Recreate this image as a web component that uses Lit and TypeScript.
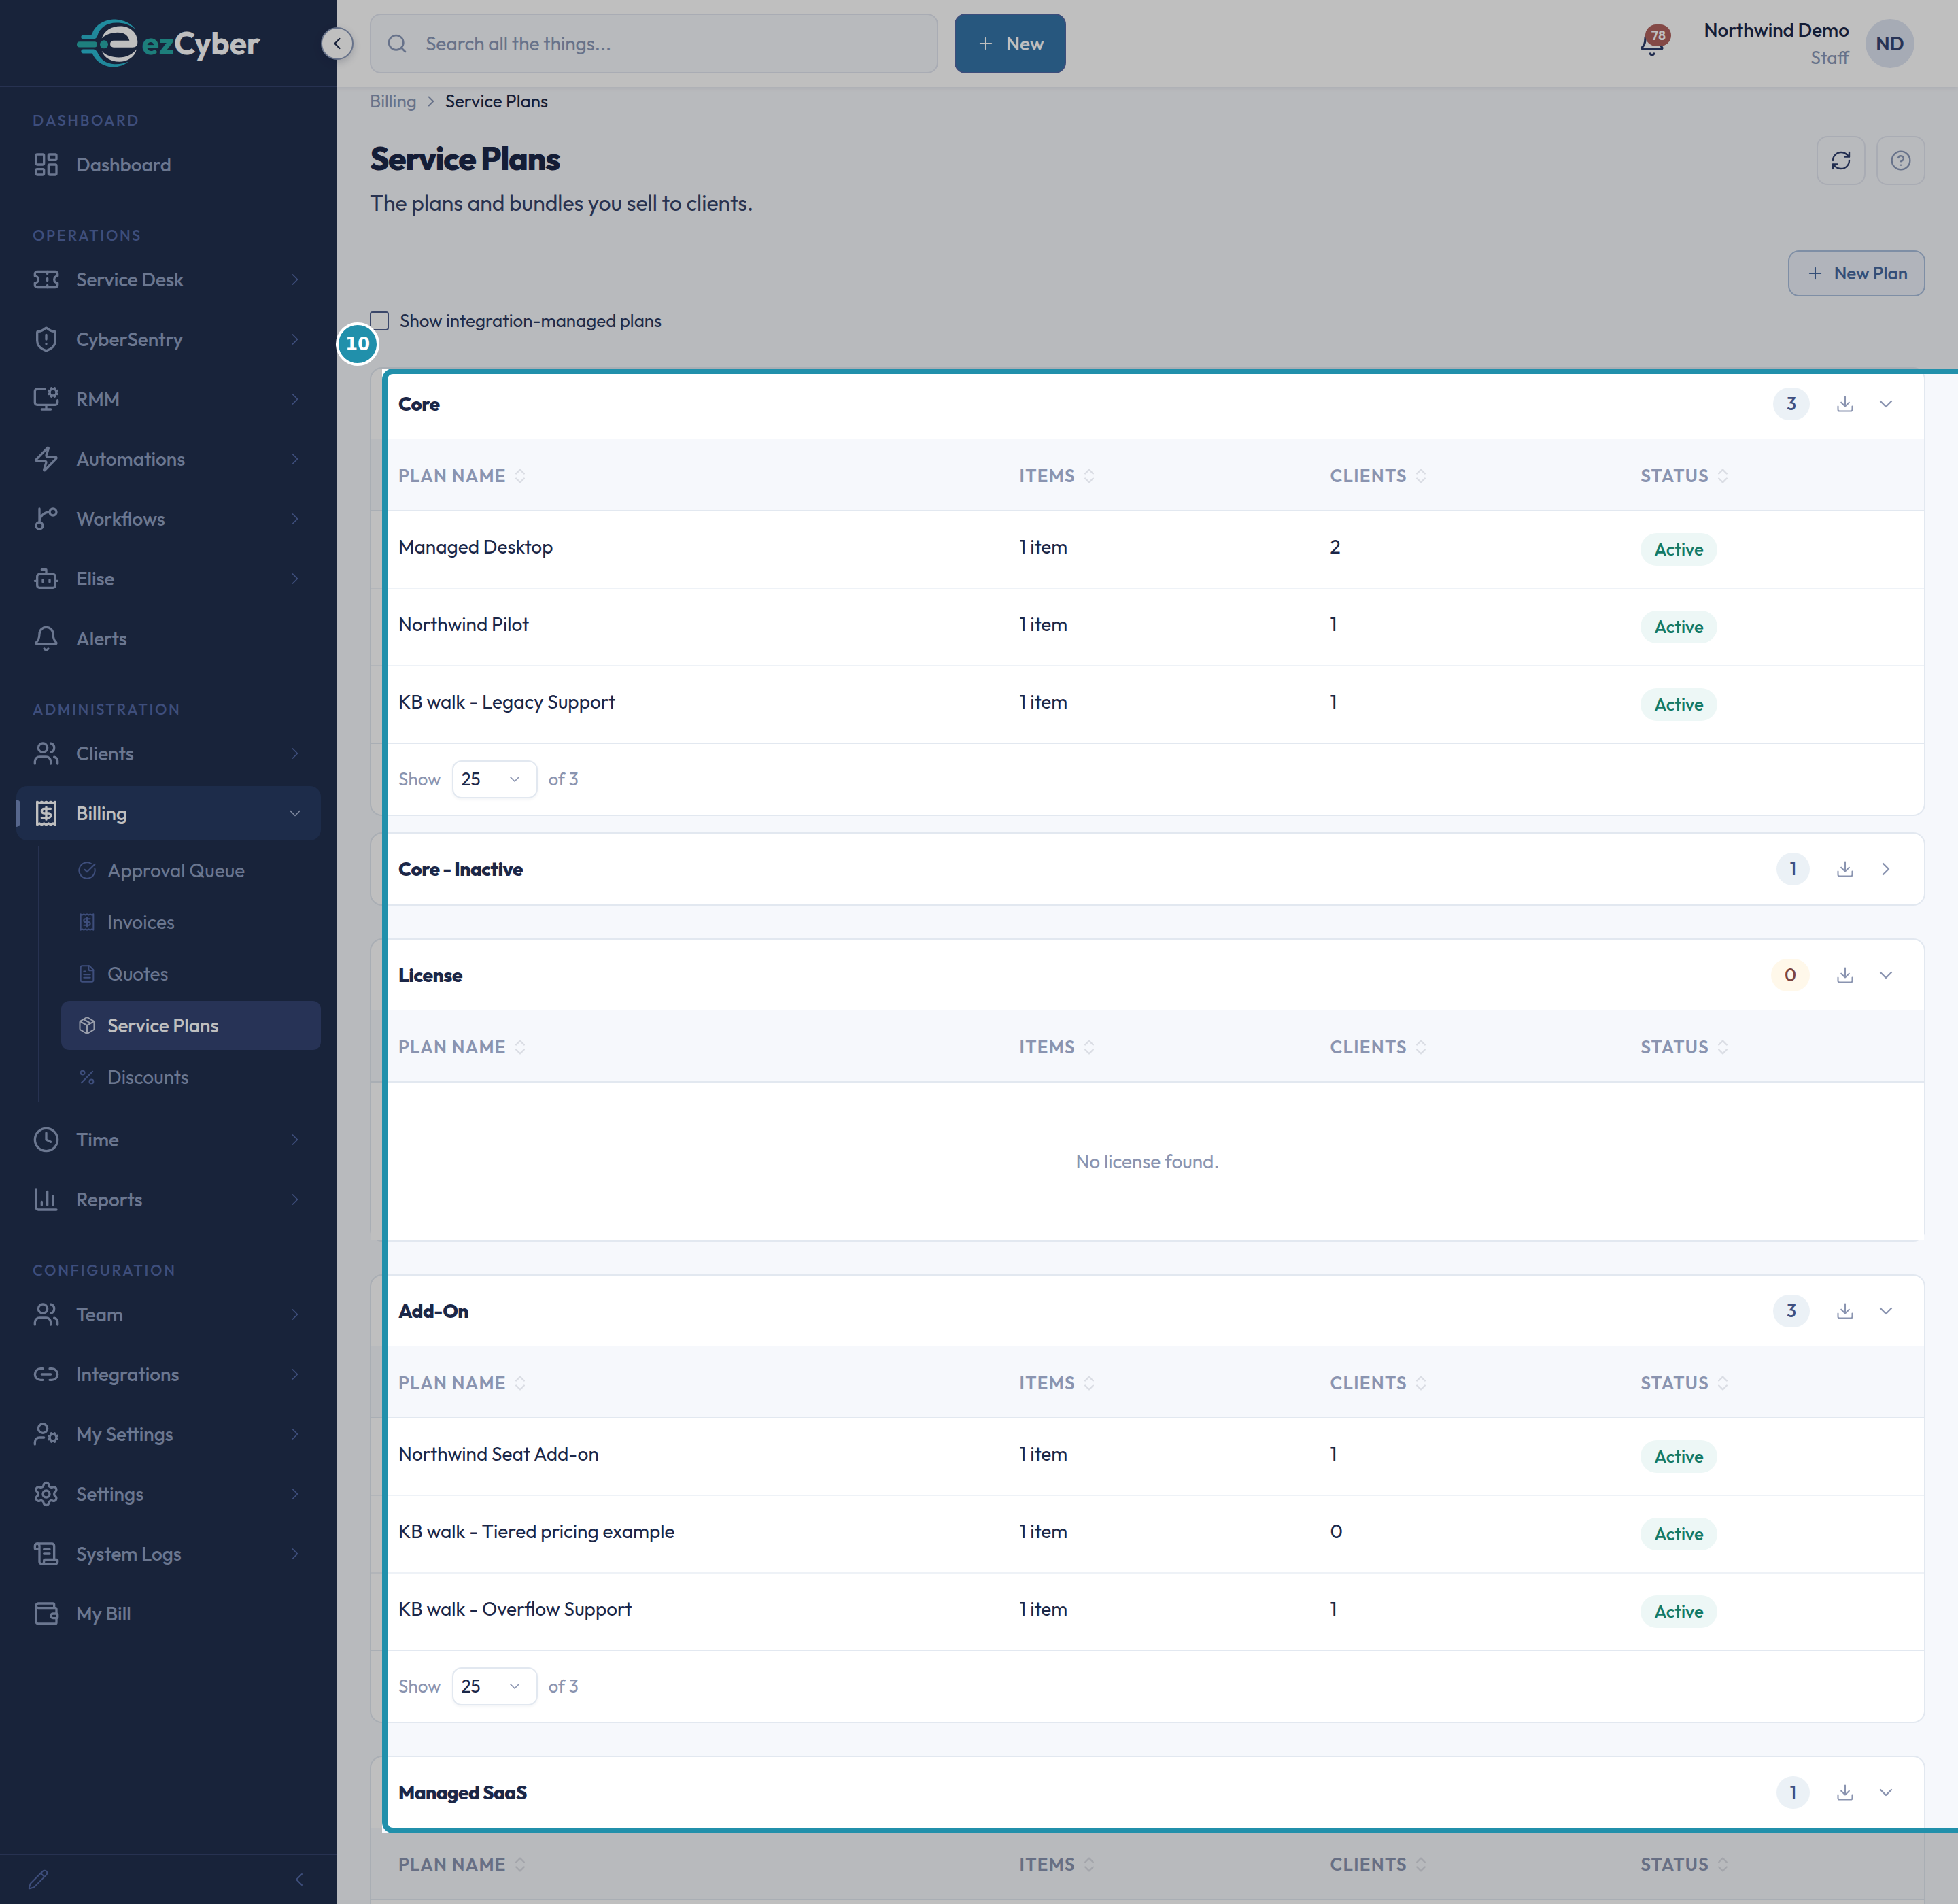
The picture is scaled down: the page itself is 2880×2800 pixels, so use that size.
import { LitElement, html, css, svg, nothing } from 'lit';
import { customElement, property } from 'lit/decorators.js';
import { classMap } from 'lit/directives/class-map.js';

const icons: Record<string, unknown> = {
    dashboard: svg`<rect x="3" y="3" width="7" height="9" rx="1"/><rect x="14" y="3" width="7" height="5" rx="1"/><rect x="14" y="12" width="7" height="9" rx="1"/><rect x="3" y="16" width="7" height="5" rx="1"/>`,
    ticket: svg`<path d="M2 9a3 3 0 0 1 0 6v2a2 2 0 0 0 2 2h16a2 2 0 0 0 2-2v-2a3 3 0 0 1 0-6V7a2 2 0 0 0-2-2H4a2 2 0 0 0-2 2Z"/><path d="M13 5v2M13 17v2M13 11v2"/>`,
    shield: svg`<path d="M20 13c0 5-3.5 7.5-7.66 8.95a1 1 0 0 1-.67-.01C7.5 20.5 4 18 4 13V6a1 1 0 0 1 1-1c2 0 4.5-1.2 6.24-2.72a1.17 1.17 0 0 1 1.52 0C14.51 3.81 17 5 19 5a1 1 0 0 1 1 1z"/><path d="M12 8v4M12 16h.01"/>`,
    monitor: svg`<path d="M12 17v4M8 21h8M22 13v2a2 2 0 0 1-2 2H4a2 2 0 0 1-2-2V5a2 2 0 0 1 2-2h7"/><circle cx="18" cy="6" r="3"/><path d="m15.2 4.9-.9-.4M15.2 7.1l-.9.4M16.9 3.2l-.4-.9M16.9 8.8l-.4.9M19.5 2.3l-.4.9M19.5 9.7l-.4-.9M21.7 4.5l-.9.4M21.7 7.5l-.9-.4"/>`,
    zap: svg`<path d="M4 14a1 1 0 0 1-.78-1.63l9.9-10.2a.5.5 0 0 1 .86.46l-1.92 6.02A1 1 0 0 0 13 10h7a1 1 0 0 1 .78 1.63l-9.9 10.2a.5.5 0 0 1-.86-.46l1.92-6.02A1 1 0 0 0 11 14z"/>`,
    branch: svg`<path d="M15 6a9 9 0 0 0-9 9V3"/><circle cx="18" cy="6" r="3"/><circle cx="6" cy="18" r="3"/>`,
    bot: svg`<path d="M12 8V4H8"/><rect x="4" y="8" width="16" height="12" rx="2"/><path d="M2 14h2M20 14h2M15 13v2M9 13v2"/>`,
    bell: svg`<path d="M10.268 21a2 2 0 0 0 3.464 0"/><path d="M3.262 15.326A1 1 0 0 0 4 17h16a1 1 0 0 0 .74-1.673C19.41 13.956 18 12.499 18 8A6 6 0 0 0 6 8c0 4.499-1.411 5.956-2.738 7.326"/>`,
    users: svg`<path d="M16 21v-2a4 4 0 0 0-4-4H6a4 4 0 0 0-4 4v2"/><circle cx="9" cy="7" r="4"/><path d="M22 21v-2a4 4 0 0 0-3-3.87M16 3.13a4 4 0 0 1 0 7.75"/>`,
    receipt: svg`<path d="M4 2v20l2-1 2 1 2-1 2 1 2-1 2 1 2-1 2 1V2l-2 1-2-1-2 1-2-1-2 1-2-1-2 1Z"/><path d="M16 8h-6a2 2 0 1 0 0 4h4a2 2 0 1 1 0 4H8M12 17.5v-11"/>`,
    approve: svg`<path d="M21.801 10A10 10 0 1 1 17 3.335"/><path d="m9 11 3 3L22 4"/>`,
    file: svg`<path d="M15 2H6a2 2 0 0 0-2 2v16a2 2 0 0 0 2 2h12a2 2 0 0 0 2-2V7Z"/><path d="M14 2v4a2 2 0 0 0 2 2h4M10 9H8M16 13H8M16 17H8"/>`,
    package: svg`<path d="M11 21.73a2 2 0 0 0 2 0l7-4A2 2 0 0 0 21 16V8a2 2 0 0 0-1-1.73l-7-4a2 2 0 0 0-2 0l-7 4A2 2 0 0 0 3 8v8a2 2 0 0 0 1 1.73z"/><path d="M12 22V12M3.29 7 12 12l8.71-5M7.5 4.27l9 5.15"/>`,
    percent: svg`<path d="M19 5 5 19"/><circle cx="6.5" cy="6.5" r="2.5"/><circle cx="17.5" cy="17.5" r="2.5"/>`,
    clock: svg`<circle cx="12" cy="12" r="10"/><path d="M12 6v6l4 2"/>`,
    chart: svg`<path d="M3 3v16a2 2 0 0 0 2 2h16M18 17V9M13 17V5M8 17v-3"/>`,
    link: svg`<path d="M9 17H7A5 5 0 0 1 7 7h2M15 7h2a5 5 0 1 1 0 10h-2M8 12h8"/>`,
    userCog: svg`<circle cx="9" cy="7" r="4"/><path d="M10 15H6a4 4 0 0 0-4 4v2"/><circle cx="18" cy="15" r="3"/><path d="m21.7 16.4-.9-.3M15.2 13.9l-.9-.3M16.6 18.7l.3-.9M19.1 12.2l.3-.9M19.6 18.7l-.4-1M16.8 12.3l-.4-1M14.3 16.6l1-.4M20.7 13.8l1-.4"/>`,
    settings: svg`<path d="M9.671 4.136a2.34 2.34 0 0 1 4.659 0 2.34 2.34 0 0 0 3.319 1.915 2.34 2.34 0 0 1 2.33 4.033 2.34 2.34 0 0 0 0 3.831 2.34 2.34 0 0 1-2.33 4.033 2.34 2.34 0 0 0-3.319 1.915 2.34 2.34 0 0 1-4.659 0 2.34 2.34 0 0 0-3.32-1.915 2.34 2.34 0 0 1-2.33-4.033 2.34 2.34 0 0 0 0-3.831A2.34 2.34 0 0 1 6.35 6.051a2.34 2.34 0 0 0 3.319-1.915"/><circle cx="12" cy="12" r="3"/>`,
    scroll: svg`<path d="M15 12h-5M15 8h-5M19 17V5a2 2 0 0 0-2-2H4"/><path d="M8 21h12a2 2 0 0 0 2-2v-1a1 1 0 0 0-1-1H11a1 1 0 0 0-1 1v1a2 2 0 1 1-4 0V5a2 2 0 1 0-4 0v2a1 1 0 0 0 1 1h3"/>`,
    wallet: svg`<path d="M19 7V4a1 1 0 0 0-1-1H5a2 2 0 0 0 0 4h15a1 1 0 0 1 1 1v4h-3a2 2 0 0 0 0 4h3a1 1 0 0 0 1-1v-2a1 1 0 0 0-1-1"/><path d="M3 5v14a2 2 0 0 0 2 2h15a1 1 0 0 0 1-1v-4"/>`,
    pencil: svg`<path d="M21.174 6.812a1 1 0 0 0-3.986-3.987L3.842 16.174a2 2 0 0 0-.5.83l-1.321 4.352a.5.5 0 0 0 .623.622l4.353-1.32a2 2 0 0 0 .83-.497z"/><path d="m15 5 4 4"/>`,
    refresh: svg`<path d="M3 12a9 9 0 0 1 9-9 9.75 9.75 0 0 1 6.74 2.74L21 8M21 3v5h-5M21 12a9 9 0 0 1-9 9 9.75 9.75 0 0 1-6.74-2.74L3 16M8 16H3v5"/>`,
    help: svg`<circle cx="12" cy="12" r="10"/><path d="M9.09 9a3 3 0 0 1 5.83 1c0 2-3 3-3 3M12 17h.01"/>`,
    search: svg`<circle cx="11" cy="11" r="8"/><path d="m21 21-4.3-4.3"/>`,
    plus: svg`<path d="M5 12h14M12 5v14"/>`,
    download: svg`<path d="M21 15v4a2 2 0 0 1-2 2H5a2 2 0 0 1-2-2v-4M7 10l5 5 5-5M12 15V3"/>`,
    sort: svg`<path d="m7 15 5 5 5-5M7 9l5-5 5 5"/>`,
    left: svg`<path d="m15 18-6-6 6-6"/>`,
    right: svg`<path d="m9 18 6-6-6-6"/>`,
    down: svg`<path d="m6 9 6 6 6-6"/>`
};

@customElement('ui-icon')
class UiIcon extends LitElement {
    static styles = css`
        :host {
            display: inline-flex;
            flex: none;
            width: 28px;
            height: 28px;
        }

        svg {
            width: 100%;
            height: 100%;
            fill: none;
            stroke: currentColor;
            stroke-linecap: round;
            stroke-linejoin: round;
        }
    `;

    @property() name = '';
    @property({ type: Number }) stroke = 1.75;

    render() {
        return html`<svg viewBox="0 0 24 24" stroke-width=${this.stroke} aria-hidden="true">${icons[this.name]}</svg>`;
    }
}

interface NavItem {
    label: string;
    icon: string;
    open?: boolean;
    leaf?: boolean;
    children?: { label: string; icon: string; active?: boolean }[];
}

const navigation: { title: string; items: NavItem[] }[] = [
    { title: 'Dashboard', items: [{ label: 'Dashboard', icon: 'dashboard', leaf: true }] },
    {
        title: 'Operations',
        items: [
            { label: 'Service Desk', icon: 'ticket' },
            { label: 'CyberSentry', icon: 'shield' },
            { label: 'RMM', icon: 'monitor' },
            { label: 'Automations', icon: 'zap' },
            { label: 'Workflows', icon: 'branch' },
            { label: 'Elise', icon: 'bot' },
            { label: 'Alerts', icon: 'bell', leaf: true }
        ]
    },
    {
        title: 'Administration',
        items: [
            { label: 'Clients', icon: 'users' },
            {
                label: 'Billing',
                icon: 'receipt',
                open: true,
                children: [
                    { label: 'Approval Queue', icon: 'approve' },
                    { label: 'Invoices', icon: 'receipt' },
                    { label: 'Quotes', icon: 'file' },
                    { label: 'Service Plans', icon: 'package', active: true },
                    { label: 'Discounts', icon: 'percent' }
                ]
            },
            { label: 'Time', icon: 'clock' },
            { label: 'Reports', icon: 'chart' }
        ]
    },
    {
        title: 'Configuration',
        items: [
            { label: 'Team', icon: 'users' },
            { label: 'Integrations', icon: 'link' },
            { label: 'My Settings', icon: 'userCog' },
            { label: 'Settings', icon: 'settings' },
            { label: 'System Logs', icon: 'scroll' },
            { label: 'My Bill', icon: 'wallet', leaf: true }
        ]
    }
];

@customElement('side-nav')
class SideNav extends LitElement {
    static styles = css`
        :host {
            position: relative;
            display: flex;
            flex-direction: column;
            flex: none;
            width: 496px;
            background: #212f4e;
            color: #8f9fc1;
            font-size: 28px;
            line-height: 36px;
        }

        a {
            color: inherit;
            text-decoration: none;
        }

        .brand {
            display: flex;
            justify-content: center;
            align-items: center;
            gap: 6px;
            box-sizing: border-box;
            height: 128px;
            border-bottom: 2px solid #34436c;
            color: #fff;
            font-size: 46px;
            font-weight: 700;
            line-height: 56px;
        }

        .brand svg {
            width: 90px;
            height: 71px;
        }

        .brand span {
            color: #27a9a4;
        }

        .collapse {
            position: absolute;
            top: 40px;
            right: -24px;
            z-index: 2;
            display: flex;
            justify-content: center;
            align-items: center;
            width: 48px;
            height: 48px;
            padding: 0;
            border: 2px solid #8a99b8;
            border-radius: 50%;
            background: #fff;
            color: #1f2b4c;
            box-shadow: 0 4px 12px rgba(20, 30, 60, 0.2);
        }

        nav {
            flex: 1;
            padding: 0 24px;
        }

        h2 {
            margin: 0;
            padding: 34px 24px 10px;
            color: #5369a6;
            font-size: 22px;
            font-weight: 500;
            line-height: 30px;
            letter-spacing: 0.12em;
            text-transform: uppercase;
        }

        section + section h2 {
            padding-top: 41px;
        }

        .item {
            position: relative;
            display: flex;
            align-items: center;
            gap: 24px;
            box-sizing: border-box;
            height: 80px;
            margin-bottom: 8px;
            padding: 0 24px;
            border-radius: 16px;
            font-weight: 500;
        }

        .item > ui-icon:first-child {
            width: 40px;
            height: 40px;
        }

        .item span {
            flex: 1;
        }

        .item .chevron {
            color: #5369a6;
        }

        .item.open {
            background: #273b63;
            color: #fff;
        }

        .item.open::before {
            content: '';
            position: absolute;
            left: 0;
            top: 20px;
            width: 6px;
            height: 40px;
            border-radius: 0 6px 6px 0;
            background: #7388bb;
        }

        .item.open .chevron {
            color: #a5b2d0;
        }

        .children {
            display: flex;
            flex-direction: column;
            gap: 4px;
            margin: 0 0 16px 32px;
            padding-left: 32px;
            border-left: 2px solid #34436c;
        }

        .child {
            display: flex;
            align-items: center;
            gap: 16px;
            height: 72px;
            padding: 0 24px;
            border-radius: 12px;
        }

        .child ui-icon {
            color: #5369a6;
        }

        .child.active {
            background: #344473;
            color: #fff;
            font-weight: 500;
        }

        .child.active ui-icon {
            color: #ccd3e4;
        }

        footer {
            display: flex;
            justify-content: space-between;
            align-items: center;
            height: 72px;
            padding: 0 40px;
            border-top: 2px solid #34436c;
        }

        footer button {
            display: flex;
            padding: 0;
            border: none;
            background: none;
            color: #5369a6;
        }

        footer ui-icon {
            width: 32px;
            height: 32px;
        }
    `;

    /** @private */
    renderItem(item: NavItem) {
        return html`
            <a class=${classMap({ item: true, open: !!item.open })} href="#">
                <ui-icon name=${item.icon} stroke="2"></ui-icon>
                <span>${item.label}</span>
                ${item.leaf ? nothing : html`<ui-icon class="chevron" name=${item.open ? 'down' : 'right'} stroke="1.5"></ui-icon>`}
            </a>
            ${item.children
                ? html`<div class="children">
                      ${item.children.map(
                          child => html`
                              <a class=${classMap({ child: true, active: !!child.active })} href="#">
                                  <ui-icon name=${child.icon}></ui-icon>${child.label}
                              </a>
                          `
                      )}
                  </div>`
                : nothing}
        `;
    }

    render() {
        return html`
            <div class="brand">
                <svg viewBox="30 35 270 212" aria-hidden="true">
                    <defs>
                        <linearGradient id="swoosh" x1="0" y1="0" x2="0" y2="1">
                            <stop offset="0" stop-color="#2bbdd6" />
                            <stop offset="1" stop-color="#2bb3cc" />
                        </linearGradient>
                    </defs>
                    <path fill="url(#swoosh)" d="M58 105H88Q97 104 99 96C112 58 155 36 200 36C240 38 270 55 290 80C262 58 235 51 205 51C160 51 130 75 122 105Q118 122 104 123H58A9 9 0 0 1 58 105Z" />
                    <rect x="30" y="134" width="90" height="25" rx="12" fill="#29aaa9" />
                    <circle cx="150" cy="146" r="18" fill="#29aaa9" />
                    <path fill="url(#swoosh)" d="M58 168H104Q116 170 122 184C135 215 160 232 195 233C220 234 240 230 258 222C240 238 215 246 190 246C150 246 112 222 98 186H58A9 9 0 0 1 58 168Z" />
                    <path fill="#fff" d="M140 120C150 85 185 66 222 66C266 66 298 96 298 136C298 152 292 160 275 160H192A15 15 0 0 1 192 130H262C258 108 240 94 210 94C180 94 155 105 140 120Z" />
                    <path fill="#fff" d="M140 175C155 195 185 204 215 204C250 204 275 190 294 168C285 205 250 223 218 223C180 223 150 205 140 175Z" />
                </svg>
                <div><span>ez</span>Cyber</div>
            </div>
            <button class="collapse" aria-label="Collapse sidebar"><ui-icon name="left" stroke="2"></ui-icon></button>
            <nav>
                ${navigation.map(
                    group => html`
                        <section>
                            <h2>${group.title}</h2>
                            ${group.items.map(item => this.renderItem(item))}
                        </section>
                    `
                )}
            </nav>
            <footer>
                <button aria-label="Edit menu"><ui-icon name="pencil" stroke="1.5"></ui-icon></button>
                <button aria-label="Collapse"><ui-icon name="left" stroke="1.5"></ui-icon></button>
            </footer>
        `;
    }
}

interface Plan {
    name: string;
    items: string;
    clients: number;
}

const columns = ['Plan Name', 'Items', 'Clients', 'Status'];

@customElement('plan-card')
class PlanCard extends LitElement {
    static styles = css`
        :host {
            display: block;
            border: 2px solid #e2e8f0;
            border-radius: 18px;
            background: #fff;
        }

        header {
            display: flex;
            align-items: center;
            height: 104px;
            padding: 0 40px;
        }

        h3 {
            flex: 1;
            margin: 0;
            font-size: 28px;
            font-weight: 800;
            letter-spacing: -0.02em;
        }

        .count {
            padding: 6px 20px;
            border-radius: 24px;
            background: #ebf1f6;
            color: #3f5080;
            font-size: 26px;
            font-weight: 500;
            line-height: 36px;
        }

        .count.empty {
            background: #fff8ea;
            color: #7d4540;
        }

        .action {
            display: flex;
            padding: 14px;
            border: none;
            background: none;
            color: #8a94b0;
        }

        .download {
            margin: 0 16px 0 24px;
        }

        .toggle {
            padding: 0;
        }

        .toggle ui-icon {
            width: 32px;
            height: 32px;
        }

        table {
            width: 100%;
            table-layout: fixed;
            border-collapse: separate;
            border-spacing: 0;
        }

        th,
        td {
            box-sizing: border-box;
            padding: 0 40px;
            text-align: left;
        }

        th {
            width: 20%;
            height: 106px;
            padding-top: 4px;
            border-bottom: 2px solid #e2e8f0;
            background: #f6f8fc;
            color: #8a94b0;
            font-size: 26px;
            font-weight: 600;
            letter-spacing: 0.05em;
            text-transform: uppercase;
        }

        th:first-child {
            width: 40%;
        }

        th div {
            display: flex;
            align-items: center;
            gap: 6px;
        }

        th ui-icon {
            color: #dadde4;
        }

        td {
            height: 114px;
            padding-top: 32px;
            border-bottom: 2px solid #eef2f7;
            vertical-align: top;
            line-height: 40px;
        }

        tr:last-child td {
            border-color: #e2e8f0;
        }

        .badge {
            display: block;
            width: fit-content;
            padding: 0 20px;
            border-radius: 24px;
            background: #edf7f6;
            color: #137a67;
            font-size: 26px;
            font-weight: 500;
            line-height: 48px;
        }

        tr:last-child td.none {
            height: 232px;
            padding: 0 40px;
            border: none;
            background: #fff;
            color: #8a94b0;
            text-align: center;
            vertical-align: middle;
        }

        footer {
            display: flex;
            align-items: center;
            gap: 16px;
            height: 104px;
            padding: 0 40px;
            color: #8a94b0;
            font-size: 26px;
        }

        label {
            display: flex;
            align-items: center;
            gap: 16px;
        }

        .select {
            position: relative;
            display: flex;
        }

        .select ui-icon {
            position: absolute;
            right: 22px;
            top: 16px;
            width: 24px;
            height: 24px;
            pointer-events: none;
        }

        select {
            appearance: none;
            width: 126px;
            height: 56px;
            padding: 0 12px;
            border: 2px solid #e2e8f0;
            border-radius: 14px;
            background: #fff;
            color: #1b2748;
            font: inherit;
            box-shadow: 0 2px 4px rgba(27, 39, 72, 0.05);
        }
    `;

    @property() heading = '';
    @property({ type: Number }) count = 0;
    @property({ type: Boolean }) collapsed = false;
    @property({ attribute: false }) plans: Plan[] = [];

    /** @private */
    renderRows() {
        if (!this.plans.length) {
            // a group that has plans stays blank until they are loaded
            const message = this.count ? '' : `No ${this.heading.toLowerCase()} found.`;
            return html`<tr><td class="none" colspan="4">${message}</td></tr>`;
        }

        return this.plans.map(
            plan => html`
                <tr>
                    <td>${plan.name}</td>
                    <td>${plan.items}</td>
                    <td>${plan.clients}</td>
                    <td><span class="badge">Active</span></td>
                </tr>
            `
        );
    }

    /** @private */
    renderTable() {
        return html`
            <table>
                <thead>
                    <tr>
                        ${columns.map(column => html`<th><div>${column}<ui-icon name="sort" stroke="2"></ui-icon></div></th>`)}
                    </tr>
                </thead>
                <tbody>
                    ${this.renderRows()}
                </tbody>
            </table>
            ${this.plans.length
                ? html`<footer>
                      <label>
                          Show
                          <span class="select">
                              <select>
                                  <option>25</option>
                              </select>
                              <ui-icon name="down"></ui-icon>
                          </span>
                      </label>
                      of ${this.count}
                  </footer>`
                : nothing}
        `;
    }

    render() {
        return html`
            <header>
                <h3>${this.heading}</h3>
                <span class=${classMap({ count: true, empty: this.count === 0 })}>${this.count}</span>
                <button class="action download" aria-label="Download"><ui-icon name="download"></ui-icon></button>
                <button class="action toggle" aria-label="Toggle"><ui-icon name=${this.collapsed ? 'right' : 'down'}></ui-icon></button>
            </header>
            ${this.collapsed ? nothing : this.renderTable()}
        `;
    }
}

const corePlans: Plan[] = [
    { name: 'Managed Desktop', items: '1 item', clients: 2 },
    { name: 'Northwind Pilot', items: '1 item', clients: 1 },
    { name: 'KB walk - Legacy Support', items: '1 item', clients: 1 }
];

const addOnPlans: Plan[] = [
    { name: 'Northwind Seat Add-on', items: '1 item', clients: 1 },
    { name: 'KB walk - Tiered pricing example', items: '1 item', clients: 0 },
    { name: 'KB walk - Overflow Support', items: '1 item', clients: 1 }
];

@customElement('app-root')
class AppRoot extends LitElement {
    static styles = css`
        :host {
            display: flex;
            height: 100vh;
            overflow: hidden;
            background: #f6f8fc;
            color: #1b2748;
            font-family: Outfit, Lato, sans-serif;
            font-size: 28px;
            line-height: 36px;
        }

        .page {
            flex: 1;
            min-width: 0;
        }

        .topbar {
            display: flex;
            align-items: center;
            gap: 24px;
            box-sizing: border-box;
            height: 128px;
            padding: 0 64px 0 48px;
            background: #fff;
            box-shadow: 0 2px 6px rgba(27, 39, 72, 0.08);
        }

        .search {
            display: flex;
            align-items: center;
            gap: 26px;
            box-sizing: border-box;
            flex: 0 1 836px;
            height: 88px;
            padding: 0 22px;
            border: 2px solid #e2e6f0;
            border-radius: 16px;
            background: #f6f8fc;
            color: #8a99b8;
        }

        .search ui-icon {
            width: 32px;
            height: 32px;
        }

        .search input {
            flex: 1;
            min-width: 0;
            padding: 0;
            border: none;
            outline: none;
            background: none;
            color: inherit;
            font: inherit;
        }

        .search input::placeholder {
            color: #8a99b8;
        }

        button {
            display: flex;
            justify-content: center;
            align-items: center;
            padding: 0;
            font: inherit;
        }

        .new {
            gap: 16px;
            width: 164px;
            height: 88px;
            border: 2px solid #5167a4;
            border-radius: 16px;
            background: #3575a8;
            color: #fff;
            font-weight: 500;
        }

        .notifications {
            position: relative;
            margin-left: auto;
            border: none;
            background: none;
            color: #2d3d6b;
        }

        .notifications ui-icon {
            width: 40px;
            height: 40px;
        }

        .notifications span {
            position: absolute;
            left: 10px;
            top: -8px;
            width: 38px;
            border-radius: 16px;
            background: #b0625e;
            color: #fff;
            font-size: 20px;
            font-weight: 600;
            line-height: 32px;
            text-align: center;
        }

        .user {
            display: flex;
            align-items: center;
            gap: 24px;
            margin-left: 32px;
            text-align: right;
        }

        .user b {
            display: block;
            font-weight: 500;
            line-height: 42px;
        }

        .user small {
            display: block;
            color: #8a99b8;
            font-size: 26px;
            line-height: 40px;
        }

        .avatar {
            width: 72px;
            border-radius: 50%;
            background: #dee4f2;
            color: #344473;
            font-weight: 600;
            line-height: 72px;
            text-align: center;
        }

        main {
            padding: 0 48px;
        }

        .breadcrumb {
            display: flex;
            align-items: center;
            gap: 8px;
            padding: 3px 0 33px;
            font-size: 26px;
        }

        .breadcrumb a {
            color: #8a99b8;
            text-decoration: none;
        }

        .breadcrumb ui-icon {
            width: 26px;
            height: 26px;
            color: #8a99b8;
        }

        .heading {
            display: flex;
            gap: 16px;
        }

        .heading div {
            flex: 1;
        }

        h1 {
            margin: 0;
            font-size: 48px;
            font-weight: 800;
            line-height: 64px;
            letter-spacing: -0.03em;
        }

        .heading p {
            margin: 12px 0 0;
            color: #37446b;
            font-size: 32px;
            line-height: 44px;
        }

        .square {
            box-sizing: border-box;
            width: 72px;
            height: 72px;
            border: 2px solid #e2e6f0;
            border-radius: 16px;
            background: none;
            color: #2d3d6b;
        }

        .square.muted {
            color: #8a99b8;
        }

        .square ui-icon {
            width: 32px;
            height: 32px;
        }

        .toolbar {
            display: flex;
            justify-content: flex-end;
            padding-top: 48px;
        }

        .new-plan {
            gap: 14px;
            height: 68px;
            padding: 0 24px;
            border: 2px solid #a9bedd;
            border-radius: 16px;
            background: #ecf1fa;
            color: #46689f;
            font-size: 26px;
            font-weight: 500;
        }

        .filter {
            display: flex;
            align-items: center;
            gap: 16px;
            width: fit-content;
            margin: 18px 0 50px;
            color: #2d3a60;
            font-size: 26px;
        }

        .filter input {
            appearance: none;
            width: 28px;
            height: 28px;
            margin: 0;
            border: 2px solid #4f5f8c;
            border-radius: 4px;
            background: #fff;
        }

        .groups {
            position: relative;
            display: flex;
            flex-direction: column;
            gap: 48px;
        }

        .group {
            display: flex;
            flex-direction: column;
            gap: 24px;
        }

        /* dims everything around the highlighted step of the tour */
        .spotlight {
            position: absolute;
            z-index: 10;
            left: 18px;
            right: -96px;
            top: 2px;
            height: 2154px;
            box-shadow: 0 0 0 4000px rgba(0, 0, 0, 0.25);
            pointer-events: none;
        }

        .frame {
            box-sizing: border-box;
            height: 100%;
            border: 8px solid #2190ab;
            border-radius: 16px;
        }

        .step {
            position: absolute;
            left: -68px;
            top: -68px;
            width: 56px;
            border: 4px solid #fff;
            border-radius: 50%;
            background: #2190ab;
            color: #fff;
            font-family: 'DejaVu Sans', sans-serif;
            font-size: 26px;
            font-weight: 700;
            line-height: 56px;
            text-align: center;
        }
    `;

    render() {
        return html`
            <side-nav></side-nav>
            <div class="page">
                <div class="topbar">
                    <label class="search">
                        <ui-icon name="search" stroke="2"></ui-icon>
                        <input type="search" placeholder="Search all the things..." aria-label="Search" />
                    </label>
                    <button class="new"><ui-icon name="plus"></ui-icon>New</button>
                    <button class="notifications" aria-label="Notifications">
                        <ui-icon name="bell" stroke="2"></ui-icon>
                        <span>78</span>
                    </button>
                    <div class="user">
                        <div><b>Northwind Demo</b><small>Staff</small></div>
                        <div class="avatar">ND</div>
                    </div>
                </div>
                <main>
                    <div class="breadcrumb">
                        <a href="#">Billing</a><ui-icon name="right"></ui-icon><span>Service Plans</span>
                    </div>
                    <div class="heading">
                        <div>
                            <h1>Service Plans</h1>
                            <p>The plans and bundles you sell to clients.</p>
                        </div>
                        <button class="square" aria-label="Refresh"><ui-icon name="refresh"></ui-icon></button>
                        <button class="square muted" aria-label="Help"><ui-icon name="help"></ui-icon></button>
                    </div>
                    <div class="toolbar">
                        <button class="new-plan"><ui-icon name="plus"></ui-icon>New Plan</button>
                    </div>
                    <label class="filter"><input type="checkbox" />Show integration-managed plans</label>
                    <div class="groups">
                        <div class="group">
                            <plan-card heading="Core" count="3" .plans=${corePlans}></plan-card>
                            <plan-card heading="Core - Inactive" count="1" collapsed></plan-card>
                        </div>
                        <plan-card heading="License" count="0"></plan-card>
                        <plan-card heading="Add-On" count="3" .plans=${addOnPlans}></plan-card>
                        <plan-card heading="Managed SaaS" count="1"></plan-card>
                        <div class="spotlight">
                            <div class="frame"></div>
                            <div class="step">10</div>
                        </div>
                    </div>
                </main>
            </div>
        `;
    }
}
